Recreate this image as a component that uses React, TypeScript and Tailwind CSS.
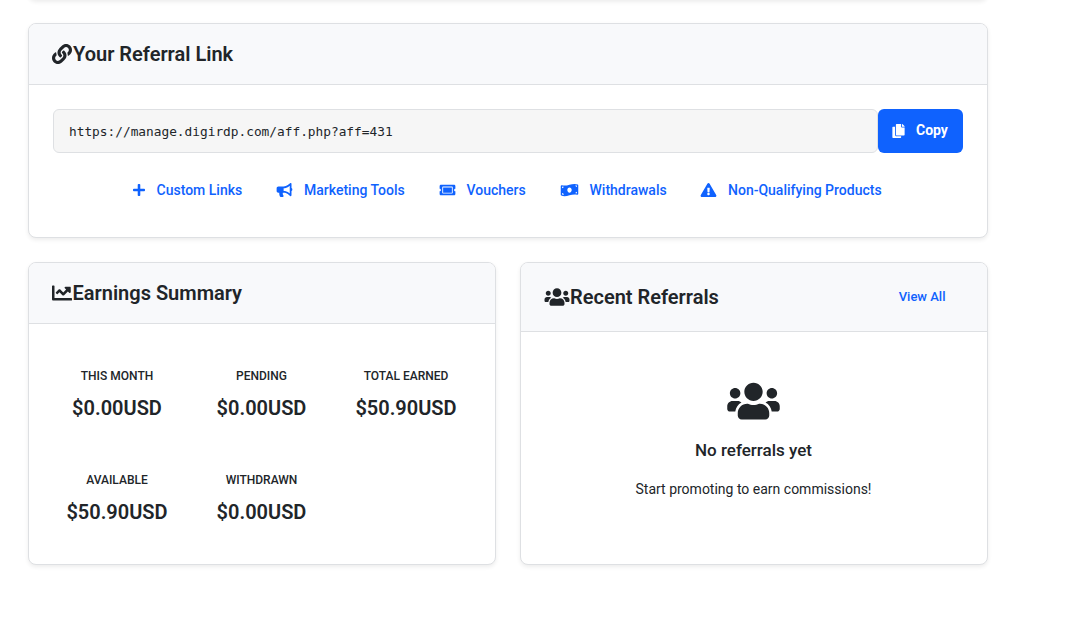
import type { ReactNode } from "react";
import {
  FaBullhorn,
  FaChartLine,
  FaCopy,
  FaExclamationTriangle,
  FaLink,
  FaMoneyBillWave,
  FaPlus,
  FaTicketAlt,
  FaUsers,
} from "react-icons/fa";

const links: { label: string; icon: ReactNode; width: string }[] = [
  { label: "Custom Links", icon: <FaPlus className="mr-px h-[14px] w-3" />, width: "w-[143.5px]" },
  { label: "Marketing Tools", icon: <FaBullhorn className="h-[14px] w-[17px]" />, width: "w-[162.5px]" },
  { label: "Vouchers", icon: <FaTicketAlt className="h-[14px] w-[17px]" />, width: "w-[121px]" },
  { label: "Withdrawals", icon: <FaMoneyBillWave className="h-[14px] w-[19px]" />, width: "w-[140.5px]" },
  { label: "Non-Qualifying Products", icon: <FaExclamationTriangle className="h-[14px] w-[17px]" />, width: "w-[182px]" },
];

const stats = [
  { label: "THIS MONTH", value: "$0.00USD" },
  { label: "PENDING", value: "$0.00USD" },
  { label: "TOTAL EARNED", value: "$50.90USD" },
  { label: "AVAILABLE", value: "$50.90USD" },
  { label: "WITHDRAWN", value: "$0.00USD" },
];

function Card({ children, className }: { children: ReactNode; className: string }) {
  return (
    <section
      className={`overflow-hidden rounded-lg border border-[#dee0e3] bg-white shadow-[0_2px_4px_rgba(0,0,0,0.075)] ${className}`}
    >
      {children}
    </section>
  );
}

function Title({ icon, children }: { icon: ReactNode; children: ReactNode }) {
  return (
    <h2 className="flex items-center text-[20px] leading-6 font-semibold whitespace-nowrap">
      {icon}
      {children}
    </h2>
  );
}

export default function App() {
  return (
    <main className="h-[621px] w-[1083px] overflow-hidden bg-white pl-7 font-['Roboto',sans-serif] text-[#212529]">
      <div className="-mt-5 mb-[23px] h-5 w-[960px] rounded-b-lg shadow-[0_2px_4px_rgba(0,0,0,0.075)]" />
      <Card className="h-[215px] w-[960px]">
        <header className="flex h-[61px] items-center border-b border-[#dee0e3] bg-[#f8f9fb] px-[23px]">
          <Title icon={<FaLink className="mr-px mb-px h-5 w-5" />}>Your Referral Link</Title>
        </header>
        <div className="px-6 pt-6">
          <div className="flex h-11">
            <div className="flex flex-1 items-center rounded-md border border-[#dee0e3] bg-[#f6f6f6] px-[15px] pt-[2px] font-['DejaVu_Sans_Mono',monospace] text-[12.8px]">
              https://manage.digirdp.com/aff.php?aff=431
            </div>
            <button className="flex w-[85px] items-center rounded-md bg-[#0f62fe] pb-px pl-[14px] text-[14px] font-bold text-white">
              <FaCopy className="mr-[11px] h-[14px] w-[13px]" />
              Copy
            </button>
          </div>
          <nav className="mt-[27px] flex pl-[79.5px]">
            {links.map((l) => (
              <a key={l.label} className={`flex h-5 shrink-0 items-center gap-[11px] text-[14px] font-medium whitespace-nowrap text-[#0f62fe] ${l.width}`}>
                {l.icon}
                {l.label}
              </a>
            ))}
          </nav>
        </div>
      </Card>
      <div className="mt-6 flex gap-6">
        <Card className="h-[303px] w-[468px]">
          <header className="flex h-[61px] items-center border-b border-[#dee0e3] bg-[#f8f9fb] px-[23px]">
            <Title icon={<FaChartLine className="mr-[0.5px] h-5 w-5" />}>Earnings Summary</Title>
          </header>
          <div className="grid grid-cols-[repeat(3,144.5px)] pt-[42px] pl-[15.75px] text-center">
            {stats.map((s) => (
              <div key={s.label} className="h-[104px]">
                <div className="text-[12px] leading-5 font-medium">{s.label}</div>
                <div className="mt-[10px] text-[20px] leading-6 font-semibold">{s.value}</div>
              </div>
            ))}
          </div>
        </Card>
        <Card className="h-[303px] w-[468px]">
          <header className="flex h-[69px] items-center justify-between border-b border-[#dee0e3] bg-[#f8f9fb] pr-[41.5px] pl-[23px]">
            <Title icon={<FaUsers className="h-5 w-[26px]" />}>Recent Referrals</Title>
            <a className="text-[13px] font-medium text-[#0f62fe]">View All</a>
          </header>
          <div className="flex flex-col items-center pt-[48px] pr-px">
            <FaUsers className="h-[42px] w-[53px]" />
            <div className="mt-[16px] text-[17px] leading-6 font-medium">No referrals yet</div>
            <div className="mt-[17px] text-[14px] leading-5">Start promoting to earn commissions!</div>
          </div>
        </Card>
      </div>
    </main>
  );
}
